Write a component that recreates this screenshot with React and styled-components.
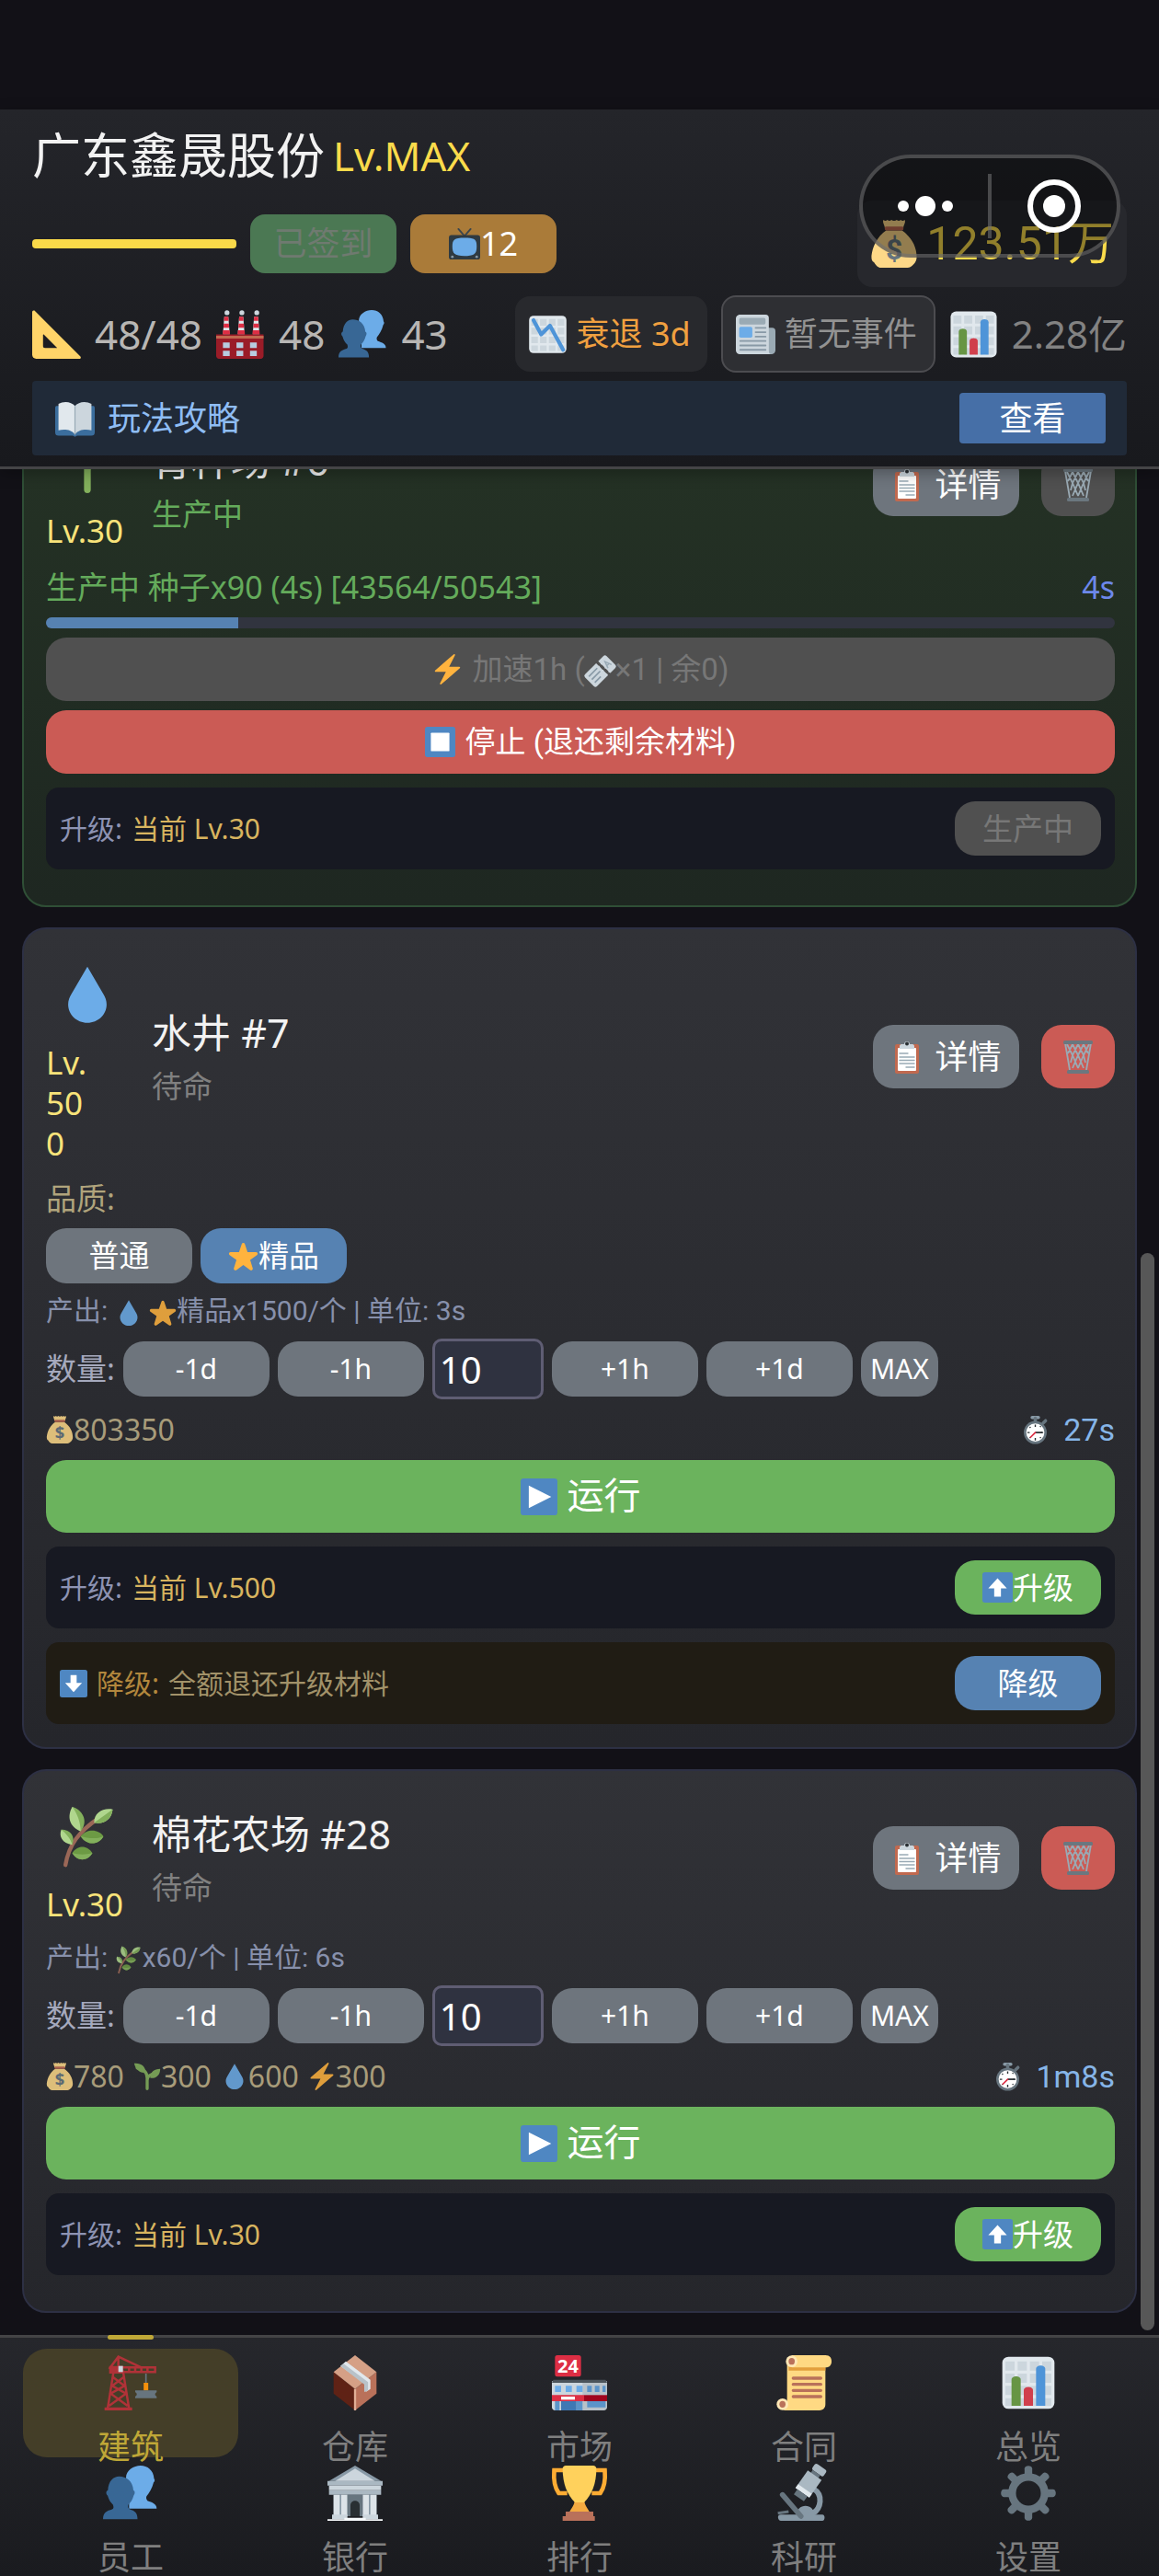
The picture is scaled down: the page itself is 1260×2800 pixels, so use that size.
import { useState } from "react";
import styled, { createGlobalStyle, css } from "styled-components";

const ICONS = {
  drop: <path fill="#6CACE8" d="M18 1.5 8.6 17.6C7.4 19.6 6.6 21.600 6.600 23.900 6.600 30 11.700 34.800 18 34.800S29.400 30 29.400 23.900c0-2.300-.8-4.300-2-6.300z" />,
  star: (
    <path
      fill="#FFB33E"
      d="M27.287 34.627c-.404 0-.806-.124-1.152-.371L18 28.422l-8.135 5.834a1.97 1.97 0 0 1-2.312-.008 1.971 1.971 0 0 1-.721-2.194l3.034-9.792-8.062-5.681a1.98 1.98 0 0 1-.708-2.203 1.978 1.978 0 0 1 1.866-1.363L12.947 13l3.179-9.549a1.976 1.976 0 0 1 3.749 0L23 13l10.036.015a1.975 1.975 0 0 1 1.159 3.566l-8.062 5.681 3.034 9.792a1.97 1.97 0 0 1-.72 2.194 1.957 1.957 0 0 1-1.16.379z"
    />
  ),
  bolt: (
    <path
      fill="#FFB33E"
      d="M32.938 15.651C32.792 15.26 32.418 15 32 15H19.925L26.89 1.458c.219-.426.106-.947-.271-1.243C26.437.071 26.218 0 26 0c-.233 0-.466.082-.653.243L18 6.588 3.347 19.243c-.316.273-.43.714-.284 1.105S3.582 21 4 21h12.075L9.11 34.542c-.219.426-.106.947.271 1.243.182.144.401.215.619.215.233 0 .466-.082.653-.243L18 29.412l14.653-12.655c.317-.273.43-.714.285-1.106z"
    />
  ),
  tv: (
    <>
      <path d="M18 9 11 1M18 9l7-8" stroke="#3b464d" strokeWidth="2" strokeLinecap="round" />
      <rect x="0" y="8" width="36" height="28" rx="3" fill="#2f3a41" />
      <path fill="#6CACE8" d="M4 21c0-8 2-10 14-10s14 2 14 10-2 11-14 11S4 29 4 21z" />
      <circle cx="4" cy="33" r="1.500" fill="#8899A6" />
      <circle cx="32" cy="33" r="1.500" fill="#8899A6" />
    </>
  ),
  moneybag: (
    <>
      <path fill="#FDD888" d="M12 8h12c7 5 11 12 11 20 0 2-1 4-2 5-2 2-3 3-5 3H8c-2 0-4-2-5-4-2-1-2-3-2-5C2 19 6 12 12 8z" />
      <path fill="#FDD888" d="M10 0c1 1 2 1 3 0 1 1 2 1 3 0 1 1 3 1 4 0 1 1 2 1 3 0 1 1 2 1 3 0 1 2-1 4-1 6H11c0-2-2-4-1-6z" />
      <rect x="11" y="5" width="14" height="3" rx="1" fill="#BF6952" />
      <text x="18" y="30" fontSize="22" textAnchor="middle" fill="#67757F" fontWeight="700">$</text>
    </>
  ),
  ruler: <path fill="#FFD469" fillRule="evenodd" d="M1 .4C.4.500 0 1 0 1.600V33c0 1.700 1.300 3 3 3h32c.9 0 1.200-1 .6-1.700L2 .6C1.700.300 1.300.300 1 .4zM8.500 18 18.500 28H9.500c-1 0-1.500-.5-1.500-1.500v-8c0-.5.2-.7.5-.5z" />,
  factory: (
    <>
      {[5, 16, 27].map((x) => (
        <g key={x}>
          <path fill="#E1E8ED" d={`M${x} 18 ${x + 1} 5h3l1 13z`} />
          <path fill="#DD2E44" d={`M${x + 1} 5h3l.2 3h-3.400zM${x + 0.6} 10h3.800l.2 3h-4.200zM${x} 15h5l.2 3h-5.400z`} />
          <circle cx={x + 3} cy="2" r="1.800" fill="#CCD6DD" />
        </g>
      ))}
      <path fill="#9A1C28" d="M0 18h35v16c0 1-1 2-2 2H2c-1 0-2-1-2-2z" />
      <path fill="#C1694F" d="M0 19h35v2H0z" />
      <path fill="#B8CCE0" d="M5 24h5v4H5zm10 0h5v4h-5zm10 0h5v4h-5zM5 30h5v4H5zm10 0h5v4h-5zm10 0h5v4h-5z" />
    </>
  ),
  people: (
    <>
      <path fill="#6CACE8" d="M35 28c0-3-3-4-6-5-.8-1-1-2-.6-3C30 18 32 15 33 11c1-1 .8-2 .3-2.500C33 3 29 0 24.500 0S15 3 15 8v16h2v4z" />
      <path fill="#386795" d="M10.500 8C15 8 19.500 11 19.800 17c1.200.5 1.200 2 .2 3.500-.8 3-2 4.500-3.500 6-.5 1.500 0 2.500 1 3 3 1 5 2 5 6.500H0c0-4.500 2.500-5.500 6-6.500 1-.5 1-1.500.5-3-1.500-1.500-2.700-3-3.500-6-1.200-1-1.200-3 .2-3.500C3.400 11 7 8 10.500 8z" transform="translate(0 -1)" />
    </>
  ),
  chartDown: (
    <>
      <rect x="1" y="1" width="34" height="34" rx="4" fill="#E1E8ED" />
      <path fill="#CCD6DD" d="M3 4h6v6H3zm8 0h6v6h-6zm8 0h6v6h-6zm8 0h6v6h-6zM3 12h6v6H3zm8 0h6v6h-6zm8 0h6v6h-6zm8 0h6v6h-6zM3 20h6v6H3zm8 0h6v6h-6zm8 0h6v6h-6zm8 0h6v6h-6zM3 28h6v5H3zm8 0h6v5h-6zm8 0h6v5h-6zm8 0h6v5h-6z" />
      <path d="m5 5 7 13 8-8 12 22" fill="none" stroke="#4E94D8" strokeWidth="3.500" strokeLinecap="round" strokeLinejoin="round" />
    </>
  ),
  chart: (
    <>
      <rect x="1" y="1" width="34" height="34" rx="4" fill="#E1E8ED" />
      <path fill="#CCD6DD" d="M3 4h6v6H3zm8 0h6v6h-6zm8 0h6v6h-6zm8 0h6v6h-6zM3 12h6v6H3zm8 0h6v6h-6zm8 0h6v6h-6zm8 0h6v6h-6zM3 20h6v6H3zm8 0h6v6h-6zm8 0h6v6h-6zm8 0h6v6h-6zM3 28h6v5H3zm8 0h6v5h-6zm8 0h6v5h-6zm8 0h6v5h-6z" />
      <path fill="#679544" d="M7 33V16c0-3 6-3 6 0v17z" />
      <path fill="#D03F4C" d="M15 33V23c0-3 6-3 6 0v10z" />
      <path fill="#4E94D8" d="M23 33V9c0-3 6-3 6 0v24z" />
    </>
  ),
  news: (
    <>
      <path fill="#9AAAB4" d="M28 12h5c2 0 3 1 3 3v17c0 2-1 4-4 4h-8z" />
      <path fill="#CCD6DD" d="M4 0h23c2 0 3 1 3 3v30c0 2 1 3 2 3H4c-2 0-4-1-4-4V4c0-2 1-4 4-4z" />
      <rect x="3" y="3" width="24" height="6" rx="1.500" fill="#9AAAB4" />
      <rect x="3" y="11" width="12" height="10" rx="1.500" fill="#6CACE8" />
      <path d="M18 12h9M18 16h9M18 20h9M4 24h23M4 28h23M4 32h23" stroke="#8899A6" strokeWidth="1.600" strokeLinecap="round" />
    </>
  ),
  book: (
    <>
      <path fill="#3B6E9E" d="M1 7h34c.6 0 1 1 1 2v22c0 2-1 3-3 3H20l-2 1-2-1H3c-2 0-3-1-3-3V9c0-1 .4-2 1-2z" />
      <path fill="#E1E8ED" d="M18 7C15 3 8 2 3 5v24c5-1 12-1 15 4z" />
      <path fill="#CCD6DD" d="M18 7c3-4 10-5 15-2v24c-5-1-12-1-15 4z" />
      <path d="M18 7v26" stroke="#99AAB5" />
    </>
  ),
  clipboard: (
    <>
      <rect x="5" y="4" width="26" height="32" rx="2" fill="#C1694F" />
      <rect x="8" y="8" width="20" height="25" rx="1" fill="#fff" />
      <path fill="#CCD6DD" d="M10 9V6c0-1 1-2 2-2h3c0-4 6-4 6 0h3c1 0 2 1 2 2v3z" />
      <circle cx="18" cy="3.500" r="2" fill="#292F33" />
      <path d="M10 14h9M10 18h16M10 21.500h16M10 25h16M17 29h9" stroke="#99AAB5" strokeWidth="1.400" strokeLinecap="round" />
    </>
  ),
  basket: (
    <>
      <path d="m4 3 5 29M32 3l-5 29M6 4l6 12 6 14M12 4l6 12 6 14M18 4l6 12 2 8M24 4l5 10M30 4l-6 12-6 14M24 4l-6 12-6 14M18 4l-6 12-2 8M12 4 7 14" stroke="#9AAAB4" strokeWidth="1.800" fill="none" />
      <rect x="2" y="0" width="32" height="4" rx="1.500" fill="#6b777f" />
      <rect x="6" y="32" width="24" height="4" rx="1.500" fill="#6b777f" />
    </>
  ),
  ticket: (
    <g transform="rotate(-45 18 18)">
      <rect x="0" y="8" width="36" height="20" rx="2.500" fill="#CCD6DD" />
      <path d="M4 13h14M4 18h14M4 23h10" stroke="#8899A6" strokeWidth="1.800" />
      <path d="M23 8v20" stroke="#505050" strokeWidth="3.500" strokeDasharray="3.500 3" strokeLinecap="round" />
      <path d="m27 22 3-8 3 8m-5-3h4" stroke="#99AAB5" strokeWidth="1.600" fill="none" />
    </g>
  ),
  stop: (
    <>
      <rect width="36" height="36" rx="3" fill="#4F87C2" />
      <rect x="7" y="7" width="22" height="22" rx="1" fill="#fff" />
    </>
  ),
  play: (
    <>
      <rect width="36" height="36" rx="3" fill="#4F87C2" />
      <path fill="#fff" d="m8 7 22 11L8 29z" />
    </>
  ),
  up: (
    <>
      <rect width="36" height="36" rx="3" fill="#4F87C2" />
      <path fill="#fff" d="m18 7 11 12h-7v10h-8V19H7z" />
    </>
  ),
  down: (
    <>
      <rect width="36" height="36" rx="3" fill="#4F87C2" />
      <path fill="#fff" d="M18 29 7 17h7V7h8v10h7z" />
    </>
  ),
  timer: (
    <>
      <rect x="12" y="0" width="12" height="4" rx="2" fill="#8899A6" />
      <path d="M18 3v5M28 9l3-3" stroke="#67757F" strokeWidth="4" strokeLinecap="round" />
      <circle cx="18" cy="21" r="14.500" fill="#67757F" />
      <circle cx="18" cy="21" r="11.500" fill="#fff" />
      <path d="M18 11v3M18 28v3M8 21h3M25 21h3M11 14l1 1M24 14l1-1M11 28l1-1M25 28l-1-1" stroke="#292F33" strokeWidth="1.600" />
      <path d="M18 21h9" stroke="#292F33" strokeWidth="2" />
      <path d="m18 21-6 6" stroke="#DD2E44" strokeWidth="2" strokeLinecap="round" />
    </>
  ),
  sprout: (
    <>
      <path d="M18 34V20C18 11 12 8 5 7M18 23c0-5 4-8 11-9" stroke="#83B05C" strokeWidth="4" strokeLinecap="round" fill="none" />
      <path fill="#83B05C" d="M1 1c8-1 15 3 15 12C8 14 3 9 1 1zM35 8c0 8-5 13-13 12 0-8 5-12 13-12z" />
    </>
  ),
  herb: (
    <>
      <path d="M5 35c2-12 8-20 20-28" stroke="#9A6757" strokeWidth="2.400" strokeLinecap="round" fill="none" />
      <path fill="#B0D68E" d="M9 .5c7 3 8 9 5 14.500C7 12 6 6 9 .5zM2.500 14C8 15 10 18 9 23c-6-1-8-5-6.500-9zM22 10c0-6 5-9 11-8-.6 6-5 9-11 8z" />
      <path fill="#83B05C" d="M9 .5c3 4 5 9 5 14.500C19 9 15 2 9 .5zM2.500 14C5 16 8 19 9 23c2-5-1-9-6.500-9zM33 2c-1 6-5 9-11 8z" />
      <path fill="#6C9A44" d="M14 18c4-5 11-4 13.500 0C25 23 18 24 14 18zM9 28c3-5 9-5 12 0-3 5-9 5-12 0z" />
      <path fill="#83B05C" d="M14 18c4 1 9 2 13.500 0C25 23 18 24 14 18zM9 28c4 1 8 1 12 0-3 5-9 5-12 0z" />
    </>
  ),
  crane: (
    <>
      <g stroke="#B03238" fill="none" strokeWidth="1.500">
        <path d="M7 10 3 35M13 10l4 25M6 14l8 6-9 5 11 8M14 14l-8 6 9 5L4 33M4 9l6-8 15 7M10 1v6" />
        <path d="M12 8h22v3H12zM17 8v3M21 8v3M25 8v3M29 8v3" />
      </g>
      <path fill="#B03238" d="M4 7h9v5H4zM1 34h18v2H1z" />
      <rect x="10" y="7" width="3" height="4" fill="#CCD6DD" />
      <path d="M28 12v10" stroke="#67757F" />
      <path fill="#F4900C" d="M26.500 18h3v5h-3z" />
      <path fill="#67757F" d="M21 23h14v1l-1 1v1l1 1v1H21v-1l1-1v-1l-1-1z" />
    </>
  ),
  box: (
    <>
      <path fill="#5F2215" d="M4 11v14l14 11V22z" />
      <path fill="#B9715A" d="M32 11v14L18 36V22z" />
      <path fill="#D5A086" d="M18 0 4 11l14 11 14-11z" />
      <path fill="#E1E8ED" d="m12 4 16 12v6l-3 2v-5L8.500 7z" />
      <path fill="#B8C2C9" d="m8.500 7 2-1.500 16 12V23L24 24v-5z" />
      <path d="M18 22v14" stroke="#E0AE96" strokeWidth="1.400" />
    </>
  ),
  store: (
    <>
      <path fill="#CCD6DD" d="M0 17h21v19H2c-1 0-2-1-2-2z" />
      <path fill="#B8C2C9" d="M20 17h16v17c0 1-1 2-2 2H20z" />
      <path fill="#4B545B" d="M1 16h34l1 2H0z" />
      <path fill="#6CACE8" d="M2 20h4v4H2zm7 0h4v4H9zm7 0h4v4h-4z" />
      <path fill="#5B94C9" d="M23 20h3v4h-3zm5 0h3v4h-3zm5 0h2v4h-2zM23 30h12v4H23zM2 30h3v6H2zm14 0h4v6h-4z" />
      <path fill="#3F78B4" d="M6 30h10v6H6z" />
      <path fill="#DD2E44" d="M0 26h21v4H0z" />
      <path fill="#A0041E" d="M21 26h15v4H21z" />
      <rect x="6" y="27" width="9" height="2" fill="#fff" />
      <rect x="2" y="0" width="17" height="14" rx="1.500" fill="#DD2E44" />
      <text x="10.500" y="11.500" fontSize="12" textAnchor="middle" fill="#fff" fontWeight="700">24</text>
    </>
  ),
  scroll: (
    <>
      <path fill="#FFD983" d="M7 3h25v29c0 2-1 4-4 4H4c3-1 3-3 3-5z" />
      <path fill="#E39F3D" d="M8 7h24v3H8z" />
      <path fill="#FFD983" d="M10 0h22c3 0 4 2 4 4s-1 4-4 4H10z" />
      <circle cx="10" cy="4" r="3.800" fill="#FFE8B6" />
      <circle cx="4" cy="32" r="3.800" fill="#FFE8B6" />
      <ellipse cx="10" cy="4" rx="2" ry="2.200" fill="#B9715A" />
      <ellipse cx="4" cy="32" rx="2" ry="2.200" fill="#B9715A" />
      <path d="M11 15h18M11 19h18M11 23h18M11 27h18" stroke="#B9715A" strokeWidth="2" strokeLinecap="round" />
    </>
  ),
  bank: (
    <>
      <path fill="#8899A6" d="M18 0 1 10h34z" />
      <path fill="#CCD6DD" d="M18 2 5 10h26z" />
      <path fill="#AAB8C2" d="M0 10h36v3H0zM1 16h34v3H1z" />
      <path fill="#CCD6DD" d="M1 13h34v3H1z" />
      <path fill="#8899A6" d="M4 19h28v14H4z" />
      <path fill="#DCE3E8" d="M4 19h4v14H4zm5 0h4v14H9zm14 0h4v14h-4zm5 0h4v14h-4z" />
      <path fill="#67757F" d="M13 19h10v14H13z" />
      <path fill="#292F33" d="M15 33v-7c0-4 6-4 6 0v7z" />
      <path fill="#CCD6DD" d="M3 32h10v3H3zm20 0h10v3H23z" />
      <path fill="#F5F8FA" d="M0 35h36v1H0zM11 34h14v2H11z" />
    </>
  ),
  trophy: (
    <>
      <path d="M8 3H1.500c-.5 6 0 11 3 15H10M28 3h6.500c.5 6 0 11-3 15H26" fill="none" stroke="#FFAC33" strokeWidth="2.800" />
      <path fill="#F4AA41" d="M15 21h6c0 5 2 6 4 10H11c2-4 4-5 4-10z" />
      <path fill="#FFD15C" d="M7 2c0-1 1-2 2-2h18c1 0 2 1 2 2 0 10-3 17-8 22h-6C10 19 7 12 7 2z" />
      <path fill="#B9715A" d="M9 30h18v3h1v3H7v-3h2z" />
    </>
  ),
  microscope: (
    <>
      <path d="M24 15c7 4 5 13 0 16" fill="none" stroke="#8899A6" strokeWidth="3.600" />
      <path fill="#8899A6" d="M13 33c0-9 12-9 12 0zM3 32h27c2 0 2 4 0 4H3c-2 0-3-4 0-4z" />
      <path d="m4 19 12 14" stroke="#67757F" strokeWidth="3.400" strokeLinecap="round" />
      <path d="m1 31 7-1" stroke="#67757F" strokeWidth="1.800" />
      <g transform="rotate(35 21 12)">
        <rect x="17" y="-2" width="9" height="5" rx="1.500" fill="#AAB8C2" />
        <path fill="#67757F" d="M18 3h6v3h-6z" />
        <path fill="#AAB8C2" d="M15.500 5h11v14h-11z" />
        <path fill="#E1E8ED" d="M15.500 16h11v3h-11z" />
        <path fill="#67757F" d="M17 19h8v4h-8z" />
      </g>
    </>
  ),
  gear: (
    <g fill="#67757F">
      {[0, 45, 90, 135, 180, 225, 270, 315].map((a) => (
        <path key={a} d="M15.500 7V2c0-2.500 5-2.500 5 0v5z" transform={`rotate(${a} 18 18)`} />
      ))}
      <circle cx="18" cy="18" r="10.600" fill="none" stroke="#67757F" strokeWidth="5" />
    </g>
  ),
};

const Icon = ({ name, size = 32, dim }) => (
  <IconSvg viewBox="0 0 36 36" $size={size} $dim={dim} aria-hidden="true">
    {ICONS[name]}
  </IconSvg>
);

const TABS = [
  { icon: "crane", label: "建筑" },
  { icon: "box", label: "仓库" },
  { icon: "store", label: "市场" },
  { icon: "scroll", label: "合同" },
  { icon: "chart", label: "总览" },
  { icon: "people", label: "员工" },
  { icon: "bank", label: "银行" },
  { icon: "trophy", label: "排行" },
  { icon: "microscope", label: "科研" },
  { icon: "gear", label: "设置" },
];

const Header = () => {
  return (
    <HeaderBox>
      <TitleRow>
        <h1>广东鑫晟股份</h1>
        <span>Lv.MAX</span>
      </TitleRow>
      <HeaderRow>
        <LevelBar />
        <HeaderButton $tone="green" disabled>
          已签到
        </HeaderButton>
        <HeaderButton $tone="amber">
          <Icon name="tv" size={34} />
          12
        </HeaderButton>
        <Money>
          <Icon name="moneybag" size={52} />
          123.51万
        </Money>
      </HeaderRow>
      <HeaderRow>
        <Stats>
          <Icon name="ruler" size={53} />
          <span>48/48</span>
          <Icon name="factory" size={53} />
          <span>48</span>
          <Icon name="people" size={53} />
          <span>43</span>
        </Stats>
        <Pill>
          <Icon name="chartDown" size={43} />
          衰退 3d
        </Pill>
        <Pill $event>
          <Icon name="news" size={43} />
          暂无事件
        </Pill>
        <Worth>
          <Icon name="chart" size={53} />
          2.28亿
        </Worth>
      </HeaderRow>
      <Guide>
        <Icon name="book" size={43} />
        <span>玩法攻略</span>
        <button>查看</button>
      </Guide>
      <Capsule>
        <button aria-label="更多">
          <svg width="60" height="24" viewBox="0 0 60 24" fill="#fff">
            <circle cx="6" cy="12" r="6" />
            <circle cx="30" cy="12" r="11" />
            <circle cx="54" cy="12" r="6" />
          </svg>
        </button>
        <i />
        <button aria-label="关闭">
          <svg width="60" height="60" viewBox="0 0 60 60" fill="#fff">
            <circle cx="30" cy="30" r="26" fill="none" stroke="#fff" strokeWidth="6" />
            <circle cx="30" cy="30" r="12" />
          </svg>
        </button>
      </Capsule>
    </HeaderBox>
  );
};

const CardHead = ({ icon, level, title, status, busy }) => (
  <Head>
    <Level>
      <Icon name={icon} size={66} />
      {level.map((part) => (
        <span key={part}>{part}</span>
      ))}
    </Level>
    <Name $busy={busy}>
      <h2>{title}</h2>
      <p>{status}</p>
    </Name>
    <DetailButton>
      <Icon name="clipboard" size={36} />
      详情
    </DetailButton>
    <TrashButton disabled={busy} aria-label="拆除">
      <Icon name="basket" size={36} />
    </TrashButton>
  </Head>
);

const Amount = ({ id }) => {
  const [value, setValue] = useState("10");
  return (
    <AmountRow>
      <label htmlFor={id}>数量:</label>
      <StepButton>-1d</StepButton>
      <StepButton>-1h</StepButton>
      <input id={id} value={value} onChange={(e) => setValue(e.target.value)} />
      <StepButton>+1h</StepButton>
      <StepButton>+1d</StepButton>
      <StepButton $small>MAX</StepButton>
    </AmountRow>
  );
};

const Cost = ({ items, time }) => (
  <CostRow>
    {items.map(([icon, n]) => (
      <span key={icon}>
        <Icon name={icon} size={30} dim />
        {n}
      </span>
    ))}
    <Time>
      <Icon name="timer" size={31} />
      {time}
    </Time>
  </CostRow>
);

const RunButton = () => (
  <WideButton $tone="green" $big>
    <Icon name="play" size={40} />
    运行
  </WideButton>
);

const Upgrade = ({ level, busy }) => (
  <Panel>
    <span>升级:</span>
    <em>当前 {level}</em>
    {busy ? (
      <PanelButton disabled>生产中</PanelButton>
    ) : (
      <PanelButton $tone="green">
        <Icon name="up" size={33} />
        升级
      </PanelButton>
    )}
  </Panel>
);

const App = () => {
  const [tab, setTab] = useState("建筑");
  const progress = 18;

  return (
    <Page>
      <GlobalStyle />
      <Header />
      <Main>
        <Card $busy $bottom={39}>
          <CardHead icon="sprout" level={["Lv.30"]} title="育种场 #6" status="生产中" busy />
          <StatusRow>
            <span>生产中 种子x90 (4s) [43564/50543]</span>
            <b>4s</b>
          </StatusRow>
          <Progress>
            <div style={{ width: `${progress}%` }} />
          </Progress>
          <WideButton disabled>
            <Icon name="bolt" size={33} />
            <span>
              加速1h (<Icon name="ticket" size={33} />
              ×1 | 余0)
            </span>
          </WideButton>
          <WideButton $tone="red">
            <Icon name="stop" size={33} />
            停止 (退还剩余材料)
          </WideButton>
          <Upgrade level="Lv.30" busy />
        </Card>

        <Card $bottom={25}>
          <CardHead icon="drop" level={["Lv.", "50", "0"]} title="水井 #7" status="待命" />
          <QualityLabel>品质:</QualityLabel>
          <QualityRow>
            <QualityButton>普通</QualityButton>
            <QualityButton $tone="blue">
              <Icon name="star" size={33} />
              精品
            </QualityButton>
          </QualityRow>
          <Output>
            产出: <Icon name="drop" size={30} dim /> <Icon name="star" size={30} dim />
            精品x1500/个 | 单位: 3s
          </Output>
          <Amount id="amount-well" />
          <Cost items={[["moneybag", "803350"]]} time="27s" />
          <RunButton />
          <Upgrade level="Lv.500" />
          <Panel $down>
            <Icon name="down" size={30} />
            <span>降级:</span>
            <em>全额退还升级材料</em>
            <PanelButton $tone="blue">降级</PanelButton>
          </Panel>
        </Card>

        <Card $bottom={39}>
          <CardHead icon="herb" level={["Lv.30"]} title="棉花农场 #28" status="待命" />
          <Output>
            产出: <Icon name="herb" size={30} dim />
            x60/个 | 单位: 6s
          </Output>
          <Amount id="amount-cotton" />
          <Cost
            items={[
              ["moneybag", "780"],
              ["sprout", "300"],
              ["drop", "600"],
              ["bolt", "300"],
            ]}
            time="1m8s"
          />
          <RunButton />
          <Upgrade level="Lv.30" />
        </Card>
        <ScrollThumb />
      </Main>
      <Nav>
        {TABS.map(({ icon, label }) => (
          <Tab key={label} $active={tab === label} onClick={() => setTab(label)}>
            <Icon name={icon} size={60} />
            <span>{label}</span>
          </Tab>
        ))}
      </Nav>
    </Page>
  );
};

const GlobalStyle = createGlobalStyle`
  * {
    box-sizing: border-box;
    margin: 0;
    padding: 0;
  }
  body {
    background: #121117;
  }
  button, input {
    font: inherit;
    color: inherit;
    border: none;
    background: none;
  }
`;

const tones = {
  green: "#6bb35d",
  red: "#cb5b55",
  blue: "#5682b2",
  gray: "#6e757d",
};

const narrowFont = `Roboto, "Noto Sans CJK SC", sans-serif`;

const Page = styled.div`
  height: 100vh;
  padding-top: 119px;
  display: flex;
  flex-direction: column;
  background: #121117;
  color: #fff;
  font-family: "Noto Sans", "Noto Sans CJK SC", sans-serif;
  font-size: 33px;
  line-height: 44px;
  white-space: nowrap;
`;

const IconSvg = styled.svg`
  width: ${({ $size }) => $size}px;
  height: ${({ $size }) => $size}px;
  flex: none;
  overflow: visible;
  vertical-align: middle;
  opacity: ${({ $dim }) => ($dim ? 0.85 : 1)};
`;

const HeaderBox = styled.header`
  position: relative;
  z-index: 1;
  flex: none;
  display: flex;
  flex-direction: column;
  gap: 9px;
  padding: 10px 35px 12px;
  background: linear-gradient(#24252a, #18191d);
  border-bottom: 3px solid #444446;
  box-shadow: 0 4px 16px rgba(0, 0, 0, 0.3);
`;

const TitleRow = styled.div`
  height: 80px;
  display: flex;
  align-items: center;
  gap: 9px;

  h1 {
    font-size: 53px;
    font-weight: 400;
    color: #f2f2f2;
  }
  span {
    font-size: 44px;
    color: #fadb4b;
  }
`;

const HeaderRow = styled.div`
  display: flex;
  align-items: center;
  gap: 15px;
`;

const LevelBar = styled.div`
  width: 222px;
  height: 10px;
  border-radius: 4px;
  background: #f9d949;
`;

const HeaderButton = styled.button`
  width: 159px;
  height: 64px;
  display: flex;
  align-items: center;
  justify-content: center;
  border-radius: 16px;
  font-size: 36px;
  background: ${({ $tone }) => ($tone === "green" ? "#4b7853" : "#aa7b39")};
  color: ${({ disabled }) => (disabled ? "#6f7a70" : "#fff")};
`;

const Money = styled.div`
  margin-left: auto;
  height: 94px;
  padding: 0 14px;
  display: flex;
  align-items: center;
  gap: 9px;
  border-radius: 16px;
  background: #27282d;
  color: #fadb4b;
  font-family: ${narrowFont};
  font-size: 50px;
`;

const Stats = styled.div`
  display: flex;
  align-items: center;
  gap: 15px;
  margin-right: auto;
  font-size: 44px;
  color: #b8b6b4;
`;

const Pill = styled.div`
  height: 82px;
  padding: 0 18px 0 14px;
  display: flex;
  align-items: center;
  gap: 10px;
  border-radius: 16px;
  font-size: 36px;
  background: #28292d;
  color: #f0a040;

  ${({ $event }) =>
    $event &&
    css`
      height: 84px;
      border: 2px solid #4c4c50;
      background: #2e2f33;
      color: #929292;
    `}
`;

const Worth = styled.div`
  display: flex;
  align-items: center;
  gap: 15px;
  font-size: 42px;
  color: #828282;
`;

const Guide = styled.div`
  height: 81px;
  padding: 0 23px 0 25px;
  display: flex;
  align-items: center;
  gap: 14px;
  border-radius: 4px;
  background: #202a38;
  font-size: 36px;
  color: #8fbdf4;

  button {
    width: 159px;
    height: 55px;
    margin-left: auto;
    border-radius: 4px;
    background: #466fa7;
    color: #fff;
  }
`;

/* host app controls, float over the header */
const Capsule = styled.div`
  position: absolute;
  top: 49px;
  right: 42px;
  width: 284px;
  height: 112px;
  display: flex;
  align-items: center;
  border: 4px solid rgba(110, 110, 112, 0.6);
  border-radius: 56px;
  background: rgba(0, 0, 0, 0.42);

  button {
    flex: 1;
    display: flex;
    align-items: center;
    justify-content: center;
  }
  i {
    width: 4px;
    height: 70px;
    background: rgba(110, 110, 112, 0.6);
  }
`;

const Main = styled.main`
  position: relative;
  flex: 1;
  min-height: 0;
  overflow: hidden;
  padding: 0 24px 24px;
  display: flex;
  flex-direction: column;
  justify-content: flex-end;
  gap: 22px;
`;

const ScrollThumb = styled.div`
  position: absolute;
  top: 42%;
  right: 5px;
  bottom: 5px;
  width: 15px;
  border-radius: 8px;
  background: #575757;
`;

const Card = styled.section`
  flex: none;
  display: flex;
  flex-direction: column;
  gap: 10px;
  padding: 22px 22px ${({ $bottom }) => $bottom}px 24px;
  border: 2px solid ${({ $busy }) => ($busy ? "#2f4f36" : "#2d3044")};
  border-radius: 26px;
  background: ${({ $busy }) =>
    $busy ? "linear-gradient(#253325, #1e2721)" : "linear-gradient(#313237, #25262b)"};
`;

const Head = styled.div`
  display: flex;
  align-items: center;
  margin-bottom: 6px;
`;

const Level = styled.div`
  width: 115px;
  padding-top: 16px;
  display: flex;
  flex-direction: column;
  font-size: 35px;
  color: #f8e37a;

  svg {
    margin: 0 0 19px 12px;
  }
`;

const Name = styled.div`
  margin-right: auto;

  h2 {
    font-size: 43px;
    font-weight: 400;
    line-height: 64px;
    color: #f2f2f2;
  }
  p {
    line-height: 52px;
    color: ${({ $busy }) => ($busy ? "#64ab5b" : "#808080")};
  }
`;

const Button = styled.button`
  display: flex;
  align-items: center;
  justify-content: center;
  border-radius: 22px;
  background: ${({ $tone = "gray", disabled }) => (disabled ? "#505050" : tones[$tone])};
  color: ${({ disabled }) => (disabled ? "#777" : "#fff")};
`;

const DetailButton = styled(Button)`
  width: 159px;
  height: 69px;
  margin-right: 24px;
  gap: 12px;
  font-size: 36px;
`;

const TrashButton = styled(Button).attrs({ $tone: "red" })`
  width: 80px;
  height: 69px;
`;

const StatusRow = styled.div`
  display: flex;
  justify-content: space-between;
  font-size: 34px;
  line-height: 46px;
  color: #64ab5b;

  b {
    font-weight: 400;
    color: #6d88ea;
  }
`;

const Progress = styled.div`
  height: 12px;
  border-radius: 6px;
  overflow: hidden;
  background: #31343f;

  div {
    height: 100%;
    background: #5682b2;
  }
`;

const WideButton = styled(Button)`
  height: ${({ $big }) => ($big ? 79 : 69)}px;
  gap: 11px;
  font-family: ${narrowFont};
  font-size: ${({ $big }) => ($big ? 40 : 33)}px;
`;

const Panel = styled.div`
  margin-top: 5px;
  height: 89px;
  padding: 0 15px;
  display: flex;
  align-items: center;
  gap: 10px;
  border-radius: 14px;
  font-size: 30px;
  background: ${({ $down }) => ($down ? "#201c14" : "#171922")};
  color: ${({ $down }) => ($down ? "#b2873d" : "#8d93b3")};

  em {
    font-style: normal;
    color: ${({ $down }) => ($down ? "#a29269" : "#d8b45f")};
  }
`;

const PanelButton = styled(Button)`
  width: 159px;
  height: 59px;
  margin-left: auto;
  font-size: 33px;
`;

const QualityLabel = styled.p`
  color: #b0a47c;
`;

const QualityRow = styled.div`
  display: flex;
  gap: 9px;
`;

const QualityButton = styled(Button)`
  width: 159px;
  height: 60px;
`;

const Output = styled.p`
  font-family: ${narrowFont};
  font-size: 30px;
  line-height: 40px;
  color: #8790ab;
`;

const AmountRow = styled.div`
  display: flex;
  align-items: center;
  gap: 9px;

  label {
    color: #a5a9bd;
  }
  input {
    width: 121px;
    height: 66px;
    padding: 0 5px;
    border: 3px solid #5f5d73;
    border-radius: 10px;
    background: #2f3240;
    font-size: 40px;
    color: #fff;
  }
`;

const StepButton = styled(Button)`
  width: ${({ $small }) => ($small ? 84 : 159)}px;
  height: 60px;
  font-size: 30px;
`;

const CostRow = styled.div`
  display: flex;
  align-items: center;
  gap: 10px;
  font-size: 32px;
  line-height: 46px;
  color: #a89c7a;

  span {
    display: flex;
    align-items: center;
  }
`;

const Time = styled.div`
  margin-left: auto;
  display: flex;
  align-items: center;
  gap: 15px;
  font-family: ${narrowFont};
  font-size: 34px;
  color: #86b5e8;
`;

const Nav = styled.nav`
  flex: none;
  display: grid;
  grid-template-columns: repeat(5, 1fr);
  grid-auto-rows: 118px;
  gap: 2px 10px;
  padding: 12px 25px 9px;
  border-top: 3px solid #444446;
  background: linear-gradient(#26272c, #1a1b1f);
`;

const Tab = styled.button`
  position: relative;
  padding-top: 7px;
  display: flex;
  flex-direction: column;
  align-items: center;
  gap: 18px;
  border-radius: 26px;
  font-size: 36px;
  color: #7f7f7f;

  ${({ $active }) =>
    $active &&
    css`
      background: #443e28;
      color: #bfa737;

      &::before {
        content: "";
        position: absolute;
        top: -15px;
        width: 50px;
        height: 5px;
        border-radius: 3px;
        background: #bfa737;
      }
    `}
`;

export default App;
